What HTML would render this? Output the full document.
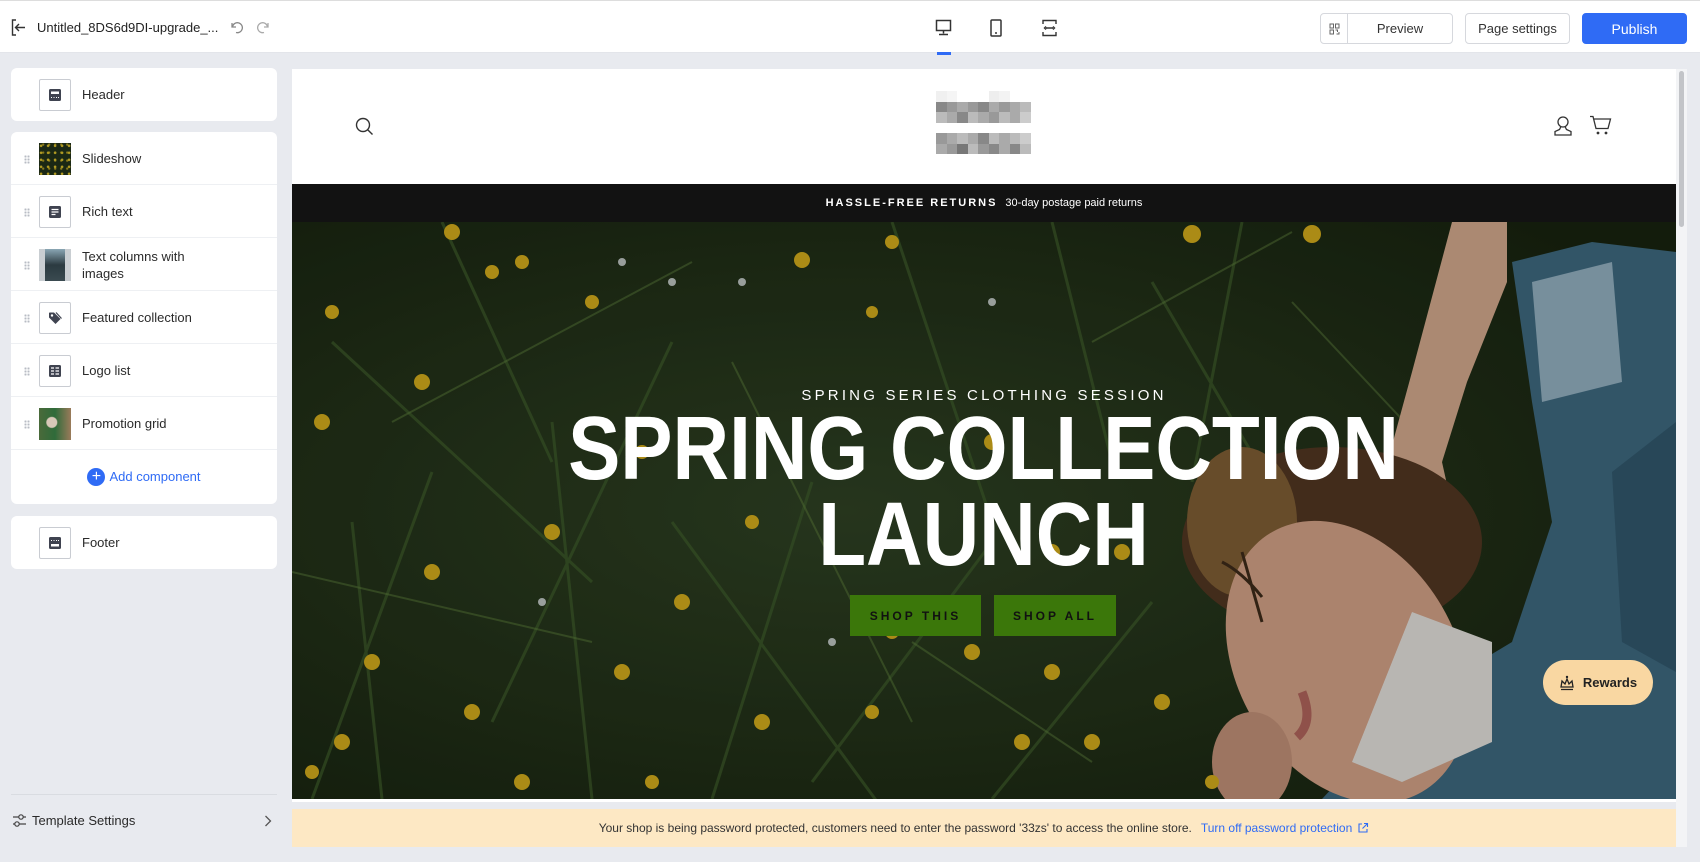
<!DOCTYPE html>
<html><head><meta charset="utf-8"><style>
*{box-sizing:border-box;margin:0;padding:0}
body{width:1700px;height:862px;overflow:hidden;background:#e8eaef;font-family:"Liberation Sans",sans-serif;color:#222;position:relative}
.top{position:absolute;left:0;top:0;width:1700px;height:53px;background:#fff;border-top:1px solid #ddd;border-bottom:1px solid #e3e5ea}
.abs{position:absolute}
.btn{position:absolute;top:12px;height:31px;border:1px solid #d6d8dd;border-radius:4px;background:#fff;font-size:13px;display:flex;align-items:center;justify-content:center;color:#333}
.card{position:absolute;left:11px;width:266px;background:#fff;border-radius:6px}
.row{position:relative;height:53px;border-bottom:1px solid #eef0f3}
.row:last-child{border-bottom:none}
.ib{position:absolute;left:28px;top:11px;width:32px;height:32px;border:1px solid #c9ccd2;border-radius:2px;background:#fff;display:flex;align-items:center;justify-content:center}
.lbl{position:absolute;left:71px;top:0;height:53px;display:flex;align-items:center;font-size:13px;color:#2a2a2a;line-height:17px}
.dr{position:absolute;left:13px;top:23px;width:6px;height:9px;background-image:radial-gradient(circle,#b8bcc4 1px,transparent 1.2px);background-size:3px 3px}
.thumb{position:absolute;left:28px;top:11px;width:32px;height:32px}
</style></head><body>
<div class="top">
 <svg class="abs" style="left:11px;top:18px" width="15" height="17" viewBox="0 0 15 17"><path d="M5 1H1.5v15H5M4.5 8.5H14M8 5l-3.5 3.5L8 12" fill="none" stroke="#333" stroke-width="1.4"/></svg>
 <div class="abs" style="left:37px;top:19px;font-size:13px;color:#222">Untitled_8DS6d9DI-upgrade_...</div>
 <svg class="abs" style="left:229px;top:19px" width="14" height="14" viewBox="0 0 14 14"><path d="M3 3v4h4M3.5 6.5A5 5 0 1 1 7 12.5" fill="none" stroke="#888" stroke-width="1.3"/></svg>
 <svg class="abs" style="left:257px;top:19px" width="14" height="14" viewBox="0 0 14 14"><path d="M11 3v4H7M10.5 6.5A5 5 0 1 0 7 12.5" fill="none" stroke="#aaa" stroke-width="1.3"/></svg>
 <svg class="abs" style="left:935px;top:18px" width="17" height="17" viewBox="0 0 17 17"><rect x="1.5" y="1.5" width="14" height="10" fill="none" stroke="#333" stroke-width="1.5"/><path d="M8.5 11.5v3M4 15.5h9" stroke="#333" stroke-width="1.5"/></svg>
 <div class="abs" style="left:937px;top:51px;width:14px;height:3px;background:#2f6bf5"></div>
 <svg class="abs" style="left:990px;top:18px" width="12" height="18" viewBox="0 0 12 18"><rect x="1" y="1" width="10" height="16" rx="1" fill="none" stroke="#333" stroke-width="1.5"/><path d="M5 14h2" stroke="#333" stroke-width="1.5"/></svg>
 <svg class="abs" style="left:1041px;top:18px" width="17" height="18" viewBox="0 0 17 18"><path d="M2 5V1.5h13V5M2 13v3.5h13V13M5 9h7M5 7.5l-1.5 1.5L5 10.5M12 7.5l1.5 1.5L12 10.5" fill="none" stroke="#333" stroke-width="1.4"/></svg>
 <div class="btn" style="left:1320px;width:133px;justify-content:flex-start"><div style="width:27px;height:29px;border-right:1px solid #d6d8dd;display:flex;align-items:center;justify-content:center"><svg width="11" height="12" viewBox="0 0 11 12"><path d="M1 1h3.5v4H1zM6.5 1H10v4H6.5zM1 7h3.5v4H1zM6.5 7h2v2M10 9v2H7.5" fill="none" stroke="#666" stroke-width="1"/></svg></div><div style="flex:1;text-align:center">Preview</div></div>
 <div class="btn" style="left:1465px;width:105px">Page settings</div>
 <div class="btn" style="left:1582px;width:105px;background:#2f6bf5;border-color:#2f6bf5;color:#fff;font-size:14px">Publish</div>
</div>

<div class="card" style="top:68px;height:53px"><div class="row"><div class="ib"><svg width="14" height="14"><rect x="1" y="1" width="12" height="12" rx="1.5" fill="#3f4350"/><rect x="3" y="3.5" width="8" height="2.5" fill="#fff"/><path d="M3 9.5h1M5.5 9.5h1M8 9.5h1M10 9.5h1" stroke="#fff"/></svg></div><div class="lbl">Header</div></div></div>

<div class="card" style="top:132px;height:372px">
 <div class="row"><div class="dr"></div><div class="thumb" style="background:radial-gradient(circle at 30% 40%,#b09a22 1px,transparent 1.6px) 0 0/7px 7px,radial-gradient(circle at 70% 20%,#8a7a1a 0.8px,transparent 1.5px) 0 0/6px 8px,#1b2814"></div><div class="lbl">Slideshow</div></div>
 <div class="row"><div class="dr"></div><div class="ib"><svg width="14" height="14"><rect x="1" y="1" width="12" height="12" rx="1.5" fill="#3f4350"/><path d="M3.5 4.5h7M3.5 7h7M3.5 9.5h4" stroke="#fff" stroke-width="1.2"/></svg></div><div class="lbl">Rich text</div></div>
 <div class="row"><div class="dr"></div><div class="thumb" style="background:linear-gradient(90deg,#c9ced2 0 18%,transparent 18% 82%,#c9ced2 82%),linear-gradient(#8aa6b4,#2b3a40 50%,#3a4a50)"></div><div class="lbl">Text columns with<br>images</div></div>
 <div class="row"><div class="dr"></div><div class="ib"><svg width="16" height="16" viewBox="0 0 16 16"><path d="M2 3v4.5l6.5 6.5 5-5L7 2.5H2.5z" fill="#3f4350"/><circle cx="5" cy="5.5" r="1.2" fill="#fff"/><path d="M9 2.5l5.5 6" stroke="#3f4350" stroke-width="1.2"/></svg></div><div class="lbl">Featured collection</div></div>
 <div class="row"><div class="dr"></div><div class="ib"><svg width="14" height="14"><rect x="1" y="1" width="12" height="12" rx="1.5" fill="#3f4350"/><path d="M3 4h3M7.5 4h3.5M3 7h3M7.5 7h3.5M3 10h3M7.5 10h3.5" stroke="#fff" stroke-width="1.2"/></svg></div><div class="lbl">Logo list</div></div>
 <div class="row"><div class="dr"></div><div class="thumb" style="background:radial-gradient(circle at 40% 45%,#d8c8b8 0 5px,transparent 6px),linear-gradient(90deg,#4a6a3a,#2f6b3a 50%,#9a7a5a)"></div><div class="lbl">Promotion grid</div></div>
 <div class="row" style="display:flex;align-items:center;justify-content:center;color:#2f6bf5;font-size:13px"><span style="display:inline-flex;width:18px;height:18px;border-radius:50%;background:#2f6bf5;color:#fff;align-items:center;justify-content:center;font-size:16px;margin-right:4px;line-height:1">+</span>Add component</div>
</div>

<div class="card" style="top:516px;height:53px"><div class="row"><div class="ib"><svg width="14" height="14"><rect x="1" y="1" width="12" height="12" rx="1.5" fill="#3f4350"/><rect x="3" y="8" width="8" height="2.5" fill="#fff"/><path d="M3 4.5h1M5.5 4.5h1M8 4.5h1M10 4.5h1" stroke="#fff"/></svg></div><div class="lbl">Footer</div></div></div>

<div class="abs" style="left:11px;top:794px;width:266px;height:1px;background:#d9dce1"></div>
<svg class="abs" style="left:12px;top:812px" width="15" height="17" viewBox="0 0 15 17"><path d="M1 5h13M1 12h13" stroke="#444" stroke-width="1.2"/><circle cx="9" cy="5" r="2.2" fill="#e8eaef" stroke="#444" stroke-width="1.2"/><circle cx="5" cy="12" r="2.2" fill="#e8eaef" stroke="#444" stroke-width="1.2"/></svg>
<div class="abs" style="left:32px;top:813px;font-size:13px;color:#2a2a2a">Template Settings</div>
<svg class="abs" style="left:264px;top:815px" width="8" height="12"><path d="M1.5 1l5 5-5 5" fill="none" stroke="#555" stroke-width="1.3"/></svg>

<!-- preview -->
<div class="abs" style="left:292px;top:69px;width:1384px;height:733px;background:#fff"></div>
<div class="abs" style="left:1676px;top:69px;width:11px;height:778px;background:#f3f4f6"></div>
<div class="abs" style="left:1679px;top:71px;width:5px;height:156px;background:#c2c4c8;border-radius:3px"></div>
<svg class="abs" style="left:355px;top:117px" width="19" height="19" viewBox="0 0 19 19"><circle cx="8" cy="8" r="6.5" fill="none" stroke="#333" stroke-width="1.4"/><path d="M12.7 12.7L17.5 17.5" stroke="#333" stroke-width="1.4"/></svg>
<div class="abs" style="left:936px;top:91px;width:95px;height:63px;display:grid;grid-template-columns:repeat(9,1fr);grid-template-rows:repeat(6,1fr)">
<div style="background:#f0f0f0"></div><div style="background:#f5f5f5"></div><div></div><div></div><div></div><div style="background:#eee"></div><div style="background:#f3f3f3"></div><div></div><div></div>
<div style="background:#888"></div><div style="background:#999"></div><div style="background:#aaa"></div><div style="background:#999"></div><div style="background:#888"></div><div style="background:#aaa"></div><div style="background:#999"></div><div style="background:#aaa"></div><div style="background:#bbb"></div>
<div style="background:#bbb"></div><div style="background:#aaa"></div><div style="background:#888"></div><div style="background:#bbb"></div><div style="background:#aaa"></div><div style="background:#999"></div><div style="background:#bbb"></div><div style="background:#aaa"></div><div style="background:#ccc"></div>
<div></div><div></div><div></div><div></div><div></div><div></div><div></div><div></div><div></div>
<div style="background:#999"></div><div style="background:#aaa"></div><div style="background:#bbb"></div><div style="background:#aaa"></div><div style="background:#888"></div><div style="background:#bbb"></div><div style="background:#aaa"></div><div style="background:#bbb"></div><div style="background:#ccc"></div>
<div style="background:#aaa"></div><div style="background:#999"></div><div style="background:#777"></div><div style="background:#bbb"></div><div style="background:#999"></div><div style="background:#888"></div><div style="background:#aaa"></div><div style="background:#888"></div><div style="background:#bbb"></div>
</div>
<svg class="abs" style="left:1553px;top:115px" width="20" height="21" viewBox="0 0 20 21"><circle cx="10" cy="7" r="5" fill="none" stroke="#333" stroke-width="1.3"/><path d="M8 11.5L6.5 14.5 2 16.5V20h16v-3.5l-4.5-2L12 11.5" fill="none" stroke="#333" stroke-width="1.3"/></svg>
<svg class="abs" style="left:1589px;top:115px" width="23" height="21" viewBox="0 0 23 21"><path d="M1 1.5h3l3 12h12l2.5-9.5H5" fill="none" stroke="#333" stroke-width="1.3"/><circle cx="9" cy="18" r="1.4" fill="#333"/><circle cx="17" cy="18" r="1.4" fill="#333"/></svg>

<div class="abs" style="left:292px;top:184px;width:1384px;height:38px;background:#121212;color:#fff;font-size:11px;display:flex;align-items:center;justify-content:center"><b style="letter-spacing:2px;margin-right:8px">HASSLE-FREE RETURNS</b><span>30-day postage paid returns</span></div>

<div class="abs" style="left:292px;top:222px;width:1384px;height:577px;overflow:hidden;background:#1f2c18">
<svg width="1384" height="577" viewBox="0 0 1384 577" style="position:absolute;left:0;top:0">
<defs><radialGradient id="g1" cx="0.4" cy="0.5" r="0.7"><stop offset="0" stop-color="#2d3f22"/><stop offset="1" stop-color="#17220f"/></radialGradient></defs>
<rect width="1384" height="577" fill="url(#g1)"/>
<g stroke="#3d5a2a" stroke-width="3" opacity="0.7">
<path d="M20 577L140 250M90 577L60 300M200 500L380 120M300 577L260 200M420 577L520 260M520 560L700 320M600 0L700 300M760 0L820 240M150 0L260 240M40 120L300 360M700 577L860 380M860 60L1000 300M380 300L600 600M950 0L900 260"/>
</g>
<g stroke="#5a7a3a" stroke-width="2" opacity="0.5"><path d="M0 350L300 420M100 200L400 40M440 140L620 500M800 120L1000 10M620 420L800 540M1000 80L1150 240"/></g>
<path d="M1160 0L1215 0L1215 60L1175 160L1150 240L1170 330L1120 330L1090 260L1120 150Z" fill="#c9a287"/>
<path d="M1220 40L1300 20L1384 30L1384 577L1030 577L1120 480L1220 420L1260 300L1240 180Z" fill="#3b6479"/>
<path d="M1240 60L1320 40L1330 160L1250 180Z" fill="#8ca9b8"/>
<path d="M1320 250L1384 200L1384 450L1330 420Z" fill="#2f5468"/>
<ellipse cx="1040" cy="320" rx="150" ry="95" fill="#4e3420"/>
<ellipse cx="950" cy="300" rx="55" ry="75" fill="#7a5a32"/>
<ellipse cx="1055" cy="440" rx="110" ry="150" fill="#c99a80" transform="rotate(-30 1055 440)"/>
<path d="M1120 390L1200 420L1200 520L1110 560L1060 540Z" fill="#d9d6d2"/>
<ellipse cx="960" cy="540" rx="40" ry="50" fill="#b98a72"/>
<path d="M1010 470q12 30 -5 45" stroke="#a86058" stroke-width="9" fill="none"/>
<path d="M930 340q20 10 40 35M950 330l20 70" stroke="#3a2818" stroke-width="3" fill="none"/>
<g fill="#c9a41a">
<circle cx="160" cy="10" r="8"/><circle cx="230" cy="40" r="7"/><circle cx="510" cy="38" r="8"/><circle cx="600" cy="20" r="7"/><circle cx="900" cy="12" r="9"/><circle cx="1020" cy="12" r="9"/><circle cx="130" cy="160" r="8"/><circle cx="200" cy="50" r="7"/><circle cx="40" cy="90" r="7"/><circle cx="30" cy="200" r="8"/><circle cx="140" cy="350" r="8"/><circle cx="260" cy="310" r="8"/><circle cx="80" cy="440" r="8"/><circle cx="180" cy="490" r="8"/><circle cx="50" cy="520" r="8"/><circle cx="330" cy="450" r="8"/><circle cx="390" cy="380" r="8"/><circle cx="470" cy="500" r="8"/><circle cx="580" cy="490" r="7"/><circle cx="680" cy="430" r="8"/><circle cx="760" cy="450" r="8"/><circle cx="800" cy="520" r="8"/><circle cx="730" cy="520" r="8"/><circle cx="230" cy="560" r="8"/><circle cx="360" cy="560" r="7"/><circle cx="600" cy="410" r="7"/><circle cx="760" cy="330" r="8"/><circle cx="830" cy="330" r="8"/><circle cx="460" cy="300" r="7"/><circle cx="350" cy="230" r="7"/><circle cx="700" cy="220" r="8"/><circle cx="870" cy="480" r="8"/><circle cx="920" cy="560" r="7"/><circle cx="20" cy="550" r="7"/><circle cx="580" cy="90" r="6"/><circle cx="300" cy="80" r="7"/>
</g>
<g fill="#d8dde0" opacity="0.8"><circle cx="330" cy="40" r="4"/><circle cx="380" cy="60" r="4"/><circle cx="250" cy="380" r="4"/><circle cx="450" cy="60" r="4"/><circle cx="540" cy="420" r="4"/><circle cx="700" cy="80" r="4"/></g>
<rect width="1384" height="577" fill="#000" opacity="0.15"/>
</svg>
<div class="abs" style="left:0;width:1384px;top:165px;text-align:center;color:#fff;font-size:15px;letter-spacing:3.2px">SPRING SERIES CLOTHING SESSION</div>
<div class="abs" style="left:0;width:1384px;top:184px;text-align:center;color:#fff;font-weight:bold;font-size:90px;line-height:86px"><span style="display:inline-block;transform:scaleX(0.87)">SPRING COLLECTION<br>LAUNCH</span></div>
<div class="abs" style="left:558px;top:373px;width:131px;height:41px;background:#3b770a;color:#111;font-weight:bold;font-size:12px;letter-spacing:3px;display:flex;align-items:center;justify-content:center">SHOP THIS</div>
<div class="abs" style="left:702px;top:373px;width:122px;height:41px;background:#3b770a;color:#111;font-weight:bold;font-size:12px;letter-spacing:3px;display:flex;align-items:center;justify-content:center">SHOP ALL</div>
<div class="abs" style="left:1251px;top:438px;width:110px;height:45px;border-radius:23px;background:#f9d7a2;display:flex;align-items:center;justify-content:center;font-weight:bold;font-size:13px;color:#222"><svg width="16" height="16" viewBox="0 0 16 16" style="margin-right:8px"><path d="M2 12l1-6 3 3 2-5 2 5 3-3 1 6zM2 14.5h12" fill="none" stroke="#222" stroke-width="1.3"/><circle cx="8" cy="2" r="1.2" fill="#222"/></svg>Rewards</div>
</div>

<div class="abs" style="left:292px;top:809px;width:1384px;height:38px;background:#fde8c4;display:flex;align-items:center;justify-content:center;font-size:12px;color:#333">Your shop is being password protected, customers need to enter the password '33zs' to access the online store.<span style="color:#2f6bf5;margin-left:9px">Turn off password protection</span><svg width="12" height="12" viewBox="0 0 12 12" style="margin-left:5px"><path d="M5 2H2v8h8V7M7 1.5h3.5V5M10.5 1.5L5.5 6.5" fill="none" stroke="#2f6bf5" stroke-width="1.1"/></svg></div>
</body></html>
